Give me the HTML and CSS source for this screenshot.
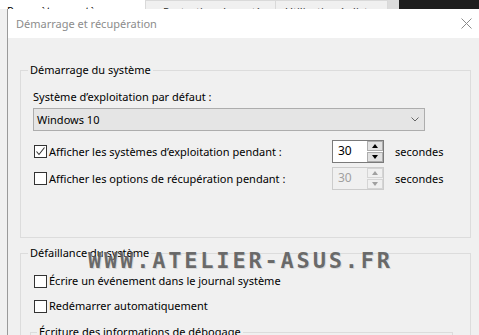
FILE: index.html
```html
<!DOCTYPE html>
<html lang="fr">
<head>
    <meta charset="UTF-8">
    <title>Démarrage et récupération</title>
    <link rel="stylesheet" href="styles.css">
</head>
<body>
    <div class="desk">
        <div class="behind">
            <div class="tab tab-sel">Paramètres système avancés</div>
            <div class="tab tab-2">Protection du système</div>
            <div class="tab tab-3">Utilisation à distance</div>
            <div class="scrollbar"></div>
            <div class="dark"></div>
        </div>

        <div class="dialog">
            <div class="titlebar">
                <span class="title">Démarrage et récupération</span>
                <svg class="close" width="11" height="11" viewBox="0 0 11 11">
                    <path d="M0.5 0.5 L10.5 10.5 M10.5 0.5 L0.5 10.5" stroke="#8a8a8a" stroke-width="1" fill="none"/>
                </svg>
            </div>

            <div class="body">
                <fieldset class="group">
                    <legend>Démarrage du système</legend>
                    <div class="label">Système d’exploitation par défaut :</div>
                    <div class="combo">
                        <span>Windows 10</span>
                        <svg width="8" height="5" viewBox="0 0 8 5">
                            <path d="M0.5 0.5 L4 4 L7.5 0.5" stroke="#666" stroke-width="1" fill="none"/>
                        </svg>
                    </div>

                    <div class="row row-first">
                        <div class="check-label">
                            <span class="box">
                                <svg width="11" height="11" viewBox="0 0 11 11">
                                    <path d="M1.5 5.5 L4 8.5 L9.5 1.5" stroke="#333" stroke-width="1.1" fill="none"/>
                                </svg>
                            </span>
                            <span>Afficher les systèmes d’exploitation pendant :</span>
                        </div>
                        <div class="spin">
                            <span class="spin-val">30</span>
                            <div class="spin-btns">
                                <span class="sbtn"><i class="up"></i></span>
                                <span class="sbtn"><i class="down"></i></span>
                            </div>
                        </div>
                        <span class="unit">secondes</span>
                    </div>

                    <div class="row">
                        <div class="check-label">
                            <span class="box"></span>
                            <span>Afficher les options de récupération pendant :</span>
                        </div>
                        <div class="spin disabled">
                            <span class="spin-val">30</span>
                            <div class="spin-btns">
                                <span class="sbtn"><i class="up"></i></span>
                                <span class="sbtn"><i class="down"></i></span>
                            </div>
                        </div>
                        <span class="unit">secondes</span>
                    </div>
                </fieldset>

                <fieldset class="group group-2">
                    <legend>Défaillance du système</legend>
                    <div class="check-label line line-first">
                        <span class="box"></span>
                        <span>Écrire un événement dans le journal système</span>
                    </div>
                    <div class="check-label line">
                        <span class="box"></span>
                        <span>Redémarrer automatiquement</span>
                    </div>
                    <fieldset class="subgroup">
                        <legend>Écriture des informations de débogage</legend>
                    </fieldset>
                </fieldset>
            </div>
        </div>

        <div class="watermark">WWW.ATELIER-ASUS.FR</div>
    </div>
</body>
</html>
```

FILE: styles.css
```css
* {
    box-sizing: border-box;
}
body {
    margin: 0;
    width: 479px;
    height: 335px;
    overflow: hidden;
    font-family: "Noto Sans", "Open Sans", sans-serif;
    font-size: 11px;
    color: #000;
}
.desk {
    position: relative;
    height: 335px;
    overflow: hidden;
    background: #f0f0f0;
    display: flex;
    flex-direction: column;
}

/* fenêtre derrière */
.behind {
    height: 9px;
    display: flex;
    overflow: hidden;
    flex-shrink: 0;
}
.tab {
    height: 9px;
    line-height: 16px;
    padding-top: 3px;
    white-space: nowrap;
    overflow: hidden;
    color: #333;
}
.tab-sel {
    width: 146px;
    background: #fff;
    padding-left: 7px;
    border-right: 1px solid #d9d9d9;
    color: #000;
}
.tab-2 {
    width: 130px;
    padding-left: 17px;
    border-top: 1px solid #d9d9d9;
    border-right: 1px solid #d9d9d9;
}
.tab-3 {
    width: 112px;
    padding-left: 9px;
    border-top: 1px solid #d9d9d9;
    border-right: 1px solid #d9d9d9;
}
.scrollbar {
    width: 11px;
    background: #dcdcdc;
}
.dark {
    flex: 1;
    background: #1e1e1e;
}

/* boîte de dialogue */
.dialog {
    flex: 1;
    margin-left: 7px;
    border-left: 1px solid #9a9a9a;
    display: flex;
    flex-direction: column;
}
.titlebar {
    height: 29px;
    background: #fff;
    display: flex;
    align-items: center;
    justify-content: space-between;
    padding: 0 7px 0 8px;
    flex-shrink: 0;
}
.title {
    color: #8c8c8c;
    font-size: 11px;
}
.close {
    margin-top: -1px;
}
.body {
    flex: 1;
    background: #f0f0f0;
    padding: 24px 0 0 12px;
}

.group {
    width: 451px;
    margin: 0;
    padding: 0 12px 47px 12px;
    border: 1px solid #dcdcdc;
}
.group legend {
    margin-left: -5px;
    padding: 0 2px;
    line-height: 16px;
}
.label {
    margin-top: 11px;
    line-height: 16px;
}
.combo {
    margin-top: 3px;
    width: 392px;
    height: 23px;
    background: #e5e5e5;
    border: 1px solid #adadad;
    display: flex;
    align-items: center;
    justify-content: space-between;
    padding: 0 5px 0 3px;
}

.row {
    display: flex;
    align-items: center;
    height: 23px;
    margin-top: 4px;
}
.row-first {
    margin-top: 9px;
}
.check-label {
    display: flex;
    align-items: center;
    gap: 2px;
    line-height: 16px;
}
.row .check-label {
    width: 299px;
}
.box {
    width: 13px;
    height: 13px;
    margin-left: 1px;
    border: 1px solid #333;
    background: #fff;
    display: flex;
    align-items: center;
    justify-content: center;
    flex-shrink: 0;
}

.spin {
    width: 52px;
    height: 23px;
    border: 1px solid #7a7a7a;
    background: #fff;
    display: flex;
}
.spin-val {
    flex: 1;
    padding-left: 5px;
    line-height: 20px;
    font-size: 12px;
}
.spin-btns {
    width: 16px;
    display: flex;
    flex-direction: column;
    gap: 1px;
}
.sbtn {
    flex: 1;
    background: #e1e1e1;
    border: 1px solid #adadad;
    display: flex;
    align-items: center;
    justify-content: center;
}
.sbtn i {
    width: 0;
    height: 0;
    border-left: 3px solid transparent;
    border-right: 3px solid transparent;
}
.sbtn .up {
    border-bottom: 4px solid #000;
}
.sbtn .down {
    border-top: 4px solid #000;
}
.spin.disabled {
    border-color: #cccccc;
    background: #f0f0f0;
}
.spin.disabled .spin-val {
    color: #a0a0a0;
}
.spin.disabled .sbtn {
    background: #f0f0f0;
    border-color: #d5d5d5;
}
.spin.disabled .up {
    border-bottom-color: #a0a0a0;
}
.spin.disabled .down {
    border-top-color: #a0a0a0;
}
.unit {
    margin-left: 11px;
}

.group-2 {
    margin-top: 7px;
    padding-bottom: 0;
}
.line {
    margin-top: 9px;
}
.line-first {
    margin-top: 12px;
}
.subgroup {
    width: 423px;
    height: 12px;
    margin: 10px 0 0 -3px;
    padding: 0 8px;
    border: 1px solid #dcdcdc;
    border-bottom: none;
}
.subgroup legend {
    margin-left: -2px;
}

.watermark {
    position: absolute;
    left: 88px;
    top: 248px;
    font-family: "DejaVu Sans Mono", monospace;
    font-weight: bold;
    font-size: 22px;
    letter-spacing: 2.8px;
    color: rgba(90, 90, 90, 0.88);
    text-shadow: 1px 1px 0 rgba(200, 200, 200, 0.6);
}
```
